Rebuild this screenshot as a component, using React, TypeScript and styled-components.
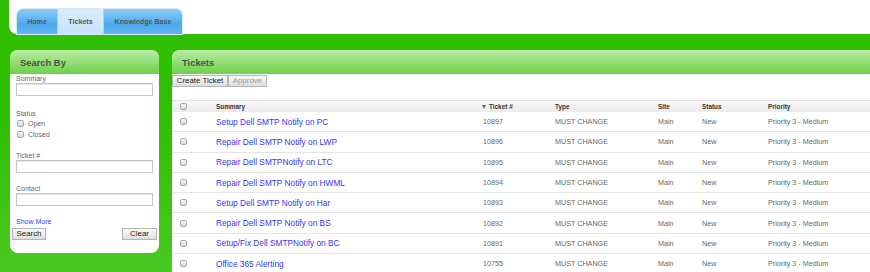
import styled, { createGlobalStyle } from "styled-components";

const GlobalStyle = createGlobalStyle`
  html, body {
    margin: 0;
    padding: 0;
    height: 100%;
  }
  body {
    font-family: "Liberation Sans", Arial, sans-serif;
    background: linear-gradient(#2fbf00 0px, #2fbf00 120px, #4bc923 100%);
    overflow: hidden;
  }
`;

const Page = styled.div`
  width: 870px;
  height: 272px;
  overflow: hidden;
`;

const Header = styled.div`
  margin-left: 9px;
  height: 34px;
  box-sizing: border-box;
  padding: 9px 0 0 8px;
  background: #fff;
  border-bottom-left-radius: 8px;
  display: flex;
  align-items: flex-end;
`;

const TabBar = styled.div`
  display: flex;
  height: 25px;
  border-radius: 6px 6px 0 0;
  overflow: hidden;
  box-shadow: 0 0 0 1px #d8e8f4;
`;

const Tab = styled.div<{ $active?: boolean; $w: number }>`
  width: ${(p) => p.$w}px;
  height: 25px;
  display: flex;
  align-items: center;
  justify-content: center;
  font-size: 7.1px;
  font-weight: bold;
  color: #555;
  border-right: 1px solid #a8d4f6;
  box-sizing: border-box;
  background: ${(p) =>
    p.$active
      ? "linear-gradient(#d9edfd, #c8e3fb)"
      : "linear-gradient(#8ecbf6 0%, #5cb4f0 45%, #4aa9ec 60%, #62b6f0 100%)"};
  &:last-child {
    border-right: none;
  }
`;

const Main = styled.div`
  display: flex;
  gap: 13px;
  padding: 16px 0 0 10px;
  align-items: flex-start;
`;

const Panel = styled.div<{ $side?: boolean }>`
  background: #fff;
  border-radius: ${(p) => (p.$side ? "8px" : "8px 0 0 0")};
  ${(p) => (p.$side ? "width: 149px; height: 203px;" : "flex: 1; height: 230px;")}
  overflow: hidden;
  display: flex;
  flex-direction: column;
`;

const PanelTitle = styled.div`
  height: 24px;
  flex-shrink: 0;
  display: flex;
  align-items: center;
  padding-left: 10px;
  font-size: 9.4px;
  font-weight: bold;
  color: #505050;
  background: linear-gradient(#b9eca6 0%, #92de74 50%, #6ed14a 100%);
`;

const SearchBody = styled.div`
  padding: 0 6px 0 6px;
  display: flex;
  flex-direction: column;
`;

const Label = styled.div<{ $mt?: number }>`
  font-size: 7px;
  line-height: 9px;
  color: #666;
  margin-top: ${(p) => p.$mt ?? 0}px;
`;

const TextBox = styled.input`
  display: block;
  width: 137px;
  height: 13px;
  box-sizing: border-box;
  border: 1px solid #c4c4c4;
  box-shadow: inset 0 1px 1px #e4e4e4;
  padding: 0 2px;
  margin: 0;
  font-size: 7px;
`;

const CheckRow = styled.label`
  display: flex;
  align-items: center;
  height: 11px;
  padding-left: 1px;
  font-size: 7px;
  color: #666;
  gap: 4px;
`;

const Check = styled.input.attrs({ type: "checkbox" })`
  appearance: none;
  width: 7px;
  height: 7px;
  margin: 0;
  border: 1px solid #a9a9a9;
  border-radius: 2px;
  background: linear-gradient(#f8f8f8, #d6d6d6);
`;

const ShowMore = styled.a`
  margin-top: 11px;
  font-size: 7px;
  line-height: 9px;
  color: #3c3cf0;
  text-decoration: none;
`;

const ButtonRow = styled.div`
  display: flex;
  justify-content: space-between;
  margin: 2px -4px 0 -4px;
`;

const Btn = styled.button<{ $w: number; $disabled?: boolean }>`
  width: ${(p) => p.$w}px;
  height: 12px;
  padding: 0;
  margin: 0;
  font-family: "Liberation Sans", Arial, sans-serif;
  font-size: 7.9px;
  line-height: 10px;
  color: ${(p) => (p.$disabled ? "#9a9a9a" : "#222")};
  border: 1px solid #b4b4b4;
  border-radius: 0;
  background: linear-gradient(#fafafa, #dedede);
`;

const Toolbar = styled.div`
  display: flex;
  margin-top: 1px;
`;

const Table = styled.div`
  margin-top: 13px;
  display: flex;
  flex-direction: column;
`;

const cols = "44px 266px 73px 103px 44px 66px 1fr";

const HeadRow = styled.div`
  display: grid;
  grid-template-columns: ${cols};
  align-items: center;
  height: 12px;
  box-sizing: border-box;
  border-top: 1px solid #e2e2e2;
  background: linear-gradient(#f6f6f6, #ececec);
  font-size: 6.4px;
  font-weight: bold;
  color: #333;
`;

const Row = styled.div`
  display: grid;
  grid-template-columns: ${cols};
  align-items: center;
  height: 20.3px;
  box-sizing: border-box;
  border-bottom: 1px solid #e6e6e6;
  font-size: 7.2px;
  color: #666;
`;

const CheckCell = styled.div`
  display: flex;
  padding-left: 8px;
`;

const SortHead = styled.div`
  display: flex;
  align-items: center;
  gap: 3px;
`;

const Arrow = styled.span`
  width: 0;
  height: 0;
  border-left: 2.5px solid transparent;
  border-right: 2.5px solid transparent;
  border-top: 4px solid #5a6a80;
`;

const Cell = styled.div<{ $pl?: number }>`
  padding-left: ${(p) => p.$pl ?? 0}px;
  white-space: nowrap;
`;

const Link = styled.a`
  font-size: 8.3px;
  color: #3535ee;
  text-decoration: none;
  white-space: nowrap;
`;

const tickets = [
  { s: "Setup Dell SMTP Notify on PC", n: "10897" },
  { s: "Repair Dell SMTP Notify on LWP", n: "10896" },
  { s: "Repair Dell SMTPNotify on LTC", n: "10895" },
  { s: "Repair Dell SMTP Notify on HWML", n: "10894" },
  { s: "Setup Dell SMTP Notify on Har", n: "10893" },
  { s: "Repair Dell SMTP Notify on BS", n: "10892" },
  { s: "Setup/Fix Dell SMTPNotify on BC", n: "10891" },
  { s: "Office 365 Alerting", n: "10755" },
];

export default function App() {
  return (
    <Page>
      <GlobalStyle />
      <Header>
        <TabBar>
          <Tab $w={41}>Home</Tab>
          <Tab $w={46} $active>Tickets</Tab>
          <Tab $w={78}>Knowledge Base</Tab>
        </TabBar>
      </Header>
      <Main>
        <Panel $side>
          <PanelTitle>Search By</PanelTitle>
          <SearchBody>
            <Label>Summary</Label>
            <TextBox />
            <Label $mt={12.5}>Status</Label>
            <CheckRow>
              <Check />
              Open
            </CheckRow>
            <CheckRow>
              <Check />
              Closed
            </CheckRow>
            <Label $mt={11}>Ticket #</Label>
            <TextBox />
            <Label $mt={11.5}>Contact</Label>
            <TextBox />
            <ShowMore href="#">Show More</ShowMore>
            <ButtonRow>
              <Btn $w={34}>Search</Btn>
              <Btn $w={35}>Clear</Btn>
            </ButtonRow>
          </SearchBody>
        </Panel>
        <Panel>
          <PanelTitle>Tickets</PanelTitle>
          <Toolbar>
            <Btn $w={56}>Create Ticket</Btn>
            <Btn $w={39} $disabled>Approve</Btn>
          </Toolbar>
          <Table>
            <HeadRow>
              <CheckCell>
                <Check />
              </CheckCell>
              <Cell>Summary</Cell>
              <SortHead>
                <Arrow />
                Ticket #
              </SortHead>
              <Cell>Type</Cell>
              <Cell>Site</Cell>
              <Cell>Status</Cell>
              <Cell>Priority</Cell>
            </HeadRow>
            {tickets.map((t) => (
              <Row key={t.n}>
                <CheckCell>
                  <Check />
                </CheckCell>
                <Link href="#">{t.s}</Link>
                <Cell $pl={1}>{t.n}</Cell>
                <Cell>MUST CHANGE</Cell>
                <Cell>Main</Cell>
                <Cell>New</Cell>
                <Cell>Priority 3 - Medium</Cell>
              </Row>
            ))}
          </Table>
        </Panel>
      </Main>
    </Page>
  );
}
